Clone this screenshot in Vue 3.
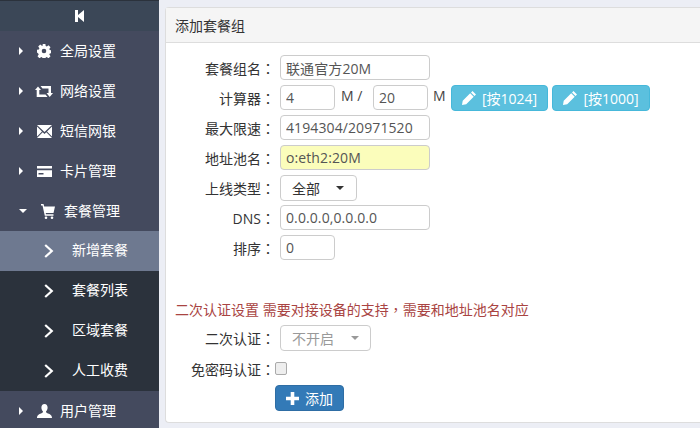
<script setup>
const menus = [
  { name: '全局设置', icon: 'cog' },
  { name: '网络设置', icon: 'retweet' },
  { name: '短信网银', icon: 'mail' },
  { name: '卡片管理', icon: 'card' }
]
const subs = ['新增套餐', '套餐列表', '区域套餐', '人工收费']
</script>

<template>
  <div class="page">
    <aside class="side">
      <div class="top">
        <svg class="collapse" width="9" height="12" viewBox="0 0 9 12"><path d="M0 0h3v5L9 0v12L3 7v5H0z" fill="#fff"/></svg>
      </div>
      <div v-for="m in menus" :key="m.name" class="item">
        <span class="tri"></span>
        <span class="ico">
          <svg v-if="m.icon === 'cog'" width="14" height="14" viewBox="0 0 14 14"><path fill="#fff" fill-rule="evenodd" d="M5.600 0h2.800l.3 2 1.100.5 1.700-1.200 2 2-1.200 1.700.5 1.100 1.900.3v2.800l-1.900.3-.5 1.100 1.200 1.700-2 2-1.700-1.200-1.100.5-.3 1.900H5.600l-.3-1.900-1.100-.5-1.700 1.200-2-2 1.200-1.700-.5-1.100L0 8.500V5.700l1.900-.3.500-1.100-1.200-1.700 2-2 1.700 1.200 1-.4zM7 4.700a2.300 2.300 0 1 0 0 4.600 2.300 2.300 0 0 0 0-4.600z"/></svg>
          <svg v-else-if="m.icon === 'retweet'" width="18" height="11" viewBox="0 0 18 11"><path fill="#fff" d="M0 4 3 .5 6 4H4.300v4.500H10.500L12.500 11H1.700V4zM18 7l-3.300 4L11.500 7h2V2.500H7.500L5.500 0H16v7z"/></svg>
          <svg v-else-if="m.icon === 'mail'" width="15" height="13" viewBox="0 0 15 13"><path fill="#fff" d="M0 0h15L7.500 7zM0 1.500 5 6.500 0 11.500zM15 1.500 10 6.500l5 5zM5.700 7.300l1.800 1.800 1.800-1.800L15 13H0z"/></svg>
          <svg v-else width="15" height="11" viewBox="0 0 15 11"><path fill="#fff" fill-rule="evenodd" d="M0 0h15v11H0zM0 2.500V4.200h15V2.500zM1.500 7v1.500h5V7z"/></svg>
        </span>
        <span class="label">{{ m.name }}</span>
      </div>
      <div class="item open">
        <span class="tri down"></span>
        <span class="ico">
          <svg width="14" height="15" viewBox="0 0 14 15"><path fill="#fff" d="M0 0h2.500l.7 2.500H14l-1.500 6.500H4.700l.3 1.300h7.500v1.400H3.800L1.500 1.400H0z"/><circle cx="5" cy="13.700" r="1.300" fill="#fff"/><circle cx="11" cy="13.700" r="1.300" fill="#fff"/></svg>
        </span>
        <span class="label">套餐管理</span>
      </div>
      <div class="subs">
        <div v-for="(s, i) in subs" :key="s" class="sub" :class="{ active: i === 0 }">
          <svg class="chev" width="10" height="14" viewBox="0 0 10 14"><path d="M1.200 1 7.800 7l-6.600 6" fill="none" stroke="#fff" stroke-width="2.200"/></svg>
          <span>{{ s }}</span>
        </div>
      </div>
      <div class="item">
        <span class="tri"></span>
        <span class="ico">
          <svg width="15" height="14" viewBox="0 0 15 14"><path fill="#fff" d="M7.500 0C9.500 0 10.600 1.500 10.600 3.600c0 1.700-.7 3.200-1.600 4 0 1 .4 1.300 2 1.900 2 .8 4 1.500 4 4.500H0c0-3 2-3.700 4-4.500 1.600-.6 2-.9 2-1.900-.9-.8-1.600-2.300-1.600-4C4.400 1.500 5.500 0 7.500 0z"/></svg>
        </span>
        <span class="label">用户管理</span>
      </div>
    </aside>

    <main class="main">
      <section class="panel">
        <header class="head">添加套餐组</header>
        <div class="body">
          <div class="row"><label>套餐组名<span class="tc">：</span></label><input class="inp wide" value="联通官方20M" /></div>
          <div class="row">
            <label>计算器<span class="tc">：</span></label>
            <input class="inp short" value="4" />
            <span class="unit first">M /</span>
            <input class="inp short" value="20" />
            <span class="unit">M</span>
            <button class="btn info"><svg width="14" height="14" viewBox="0 0 14 14"><path fill="#fff" d="M10.500 0 14 3.500 12.500 5 9 1.500zM8.200 2.300l3.500 3.500-7.500 7.500L0 14l.7-4.200z"/></svg>[按1024]</button>
            <button class="btn info"><svg width="14" height="14" viewBox="0 0 14 14"><path fill="#fff" d="M10.500 0 14 3.500 12.500 5 9 1.500zM8.200 2.300l3.500 3.500-7.500 7.500L0 14l.7-4.200z"/></svg>[按1000]</button>
          </div>
          <div class="row"><label>最大限速<span class="tc">：</span></label><input class="inp wide" value="4194304/20971520" /></div>
          <div class="row"><label>地址池名<span class="tc">：</span></label><input class="inp wide yellow" value="o:eth2:20M" /></div>
          <div class="row sel-row"><label>上线类型<span class="tc">：</span></label><div class="select s1"><span>全部</span><i class="caret"></i></div></div>
          <div class="row"><label>DNS<span class="tc">：</span></label><input class="inp wide" value="0.0.0.0,0.0.0.0" /></div>
          <div class="row"><label>排序<span class="tc">：</span></label><input class="inp short" value="0" /></div>
          <p class="note">二次认证设置 需要对接设备的支持<span class="tc">，</span>需要和地址池名对应</p>
          <div class="row sel-row"><label>二次认证<span class="tc">：</span></label><div class="select s2"><span>不开启</span><i class="caret"></i></div></div>
          <div class="row check-row"><label>免密码认证<span class="tc">：</span></label><span class="check"></span></div>
          <div class="row add-row"><button class="btn primary"><svg width="13" height="13" viewBox="0 0 13 13"><path fill="#fff" d="M4.700 0h3.600v4.700H13v3.600H8.300V13H4.700V8.300H0V4.700h4.700z"/></svg>添加</button></div>
        </div>
      </section>
    </main>
  </div>
</template>

<style>
html, body { margin: 0; padding: 0; overflow: hidden; }
</style>

<style scoped>
.page {
  display: flex;
  width: 700px;
  height: 428px;
  overflow: hidden;
  background: #eceef5;
  font-family: "Open Sans", "Noto Sans CJK SC", sans-serif;
  font-size: 14px;
  color: #333;
}
.tc { font-family: "Noto Sans CJK TC", sans-serif; }
.side {
  width: 159px;
  flex: none;
  background: #444a5e;
  color: #fff;
  border-top: 1px solid #2b323c;
}
.top {
  height: 30px;
  background: #3b4757;
  display: flex;
  align-items: center;
  justify-content: center;
}
.item {
  height: 40px;
  display: flex;
  align-items: center;
}
.tri {
  width: 0;
  height: 0;
  margin-left: 19px;
  border-left: 4px solid #fff;
  border-top: 4px solid transparent;
  border-bottom: 4px solid transparent;
}
.tri.down {
  border-top: 4px solid #fff;
  border-left: 4px solid transparent;
  border-right: 4px solid transparent;
  border-bottom: 0;
}
.ico {
  width: 18px;
  margin-left: 12px;
  margin-right: 7px;
  display: flex;
  justify-content: center;
}
.open .ico { margin-left: 14px; margin-right: 9px; width: 14px; }
.label { line-height: 20px; margin-top: -1px; }
.subs { background: #2b323c; }
.sub {
  height: 40px;
  display: flex;
  align-items: center;
  padding-left: 44px;
}
.sub span { margin: -2px 0 0 18px; line-height: 20px; }
.sub.active { background: #6e7990; }
.main { flex: 1; padding: 7px 0 0 6px; min-width: 0; }
.panel {
  height: 416px;
  background: #fff;
  border: 1px solid #ddd;
  border-right: 0;
  border-radius: 4px 0 0 4px;
  box-sizing: border-box;
}
.head {
  height: 35px;
  box-sizing: border-box;
  background: #f5f5f5;
  border-bottom: 1px solid #ddd;
  padding-left: 9px;
  line-height: 35px;
}
.body { padding-top: 12px; }
.row {
  display: flex;
  align-items: center;
  height: 25px;
  margin-bottom: 5px;
}
.row label {
  width: 109px;
  margin-right: 5px;
  padding-top: 2px;
  box-sizing: border-box;
  text-align: right;
  flex: none;
  white-space: nowrap;
  line-height: 23px;
}
.inp {
  box-sizing: border-box;
  height: 25px;
  padding: 0 5px;
  border: 1px solid #ccc;
  border-radius: 4px;
  font: 14px "Open Sans", "Noto Sans CJK SC", sans-serif;
  letter-spacing: .1px;
  color: #555;
  outline: none;
  background: #fff;
}
.wide { width: 150px; }
.short { width: 55px; }
.yellow { background: #fbfdbb; }
.unit { margin: -4px 0 0 5px; width: 13px; color: #444; }
.unit.first { width: 32px; margin-left: 6px; }
.btn {
  display: inline-flex;
  align-items: center;
  justify-content: center;
  box-sizing: border-box;
  border-radius: 4px;
  color: #fff;
  font: 14px "Open Sans", "Noto Sans CJK SC", sans-serif;
  padding: 0;
}
.btn svg { margin-right: 6px; }
.info {
  width: 97px;
  height: 26px;
  background: #5bc0de;
  border: 1px solid #46b8da;
  margin-left: 5px;
}
.info + .info { margin-left: 4px; width: 98px; }
.select {
  box-sizing: border-box;
  height: 26px;
  border: 1px solid #ccc;
  border-radius: 4px;
  display: flex;
  align-items: center;
  padding-left: 11px;
}
.s1 { width: 77px; color: #333; gap: 16px; }
.s2 { width: 91px; color: #999; gap: 17px; }
.sel-row { height: 26px; margin-bottom: 4px; }
.sel-row label { padding-top: 0; }
.caret {
  width: 0;
  height: 0;
  border-top: 4px solid #333;
  border-left: 4px solid transparent;
  border-right: 4px solid transparent;
}
.s2 .caret { border-top-color: #999; }
.note {
  margin: 41px 0 0 9px;
  height: 17px;
  line-height: 17px;
  color: #a94442;
  white-space: nowrap;
}
.note + .sel-row { margin-top: 7px; margin-bottom: 0; }
.check-row { margin-top: 5px; margin-bottom: 4px; }
.check-row label { margin-right: 0; }
.check {
  box-sizing: border-box;
  width: 12px;
  height: 13px;
  border: 1px solid #aaa;
  border-radius: 2px;
  background: #eee;
}
.add-row { height: 26px; padding-left: 109px; margin: 0; }
.primary {
  width: 69px;
  height: 26px;
  background: #337ab7;
  border: 1px solid #2e6da4;
}
</style>
